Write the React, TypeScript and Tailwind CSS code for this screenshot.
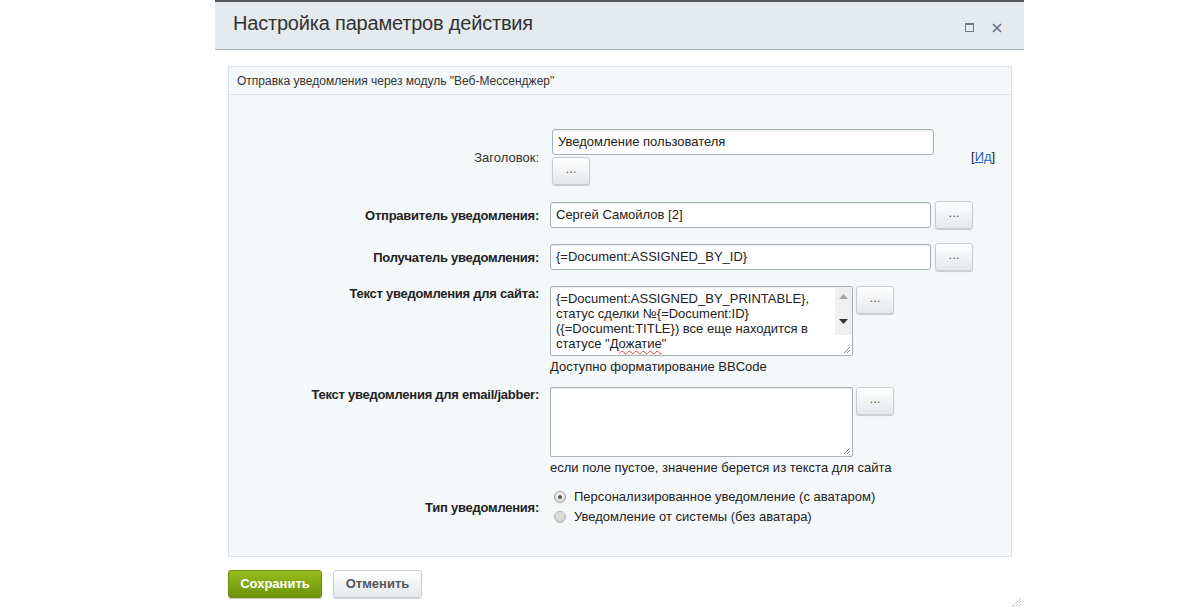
import React from 'react';

const font = "font-['Liberation_Sans',Arial,sans-serif]";

function DotsButton() {
  return (
    <button
      type="button"
      className="flex h-[28px] w-[38px] shrink-0 items-center justify-center rounded-[3px] border border-[#c6ced3] bg-gradient-to-b from-[#ffffff] to-[#e3e9ec] pb-[4px] text-[13px] text-[#555] shadow-[0_1px_1px_rgba(0,0,0,0.18)]"
    >
      ...
    </button>
  );
}

function TextInput({ value, width }: { value: string; width: string }) {
  return (
    <div
      className={`flex h-[26px] items-center rounded-[3px] border border-[#a7b0b5] bg-white px-[5px] text-[13px] text-[#222] shadow-[inset_0_1px_1px_rgba(0,0,0,0.08)] ${width}`}
    >
      {value}
    </div>
  );
}

function Grip({ color = '#8a8a8a' }: { color?: string }) {
  return (
    <svg width="9" height="9" viewBox="0 0 9 9">
      <path d="M8 2 L2 8 M8 5 L5 8" stroke={color} strokeWidth="1" />
    </svg>
  );
}

function FakeTextarea({ children, scroll }: { children?: React.ReactNode; scroll?: boolean }) {
  return (
    <div className="flex h-[70px] w-[303px] shrink-0 overflow-hidden rounded-[2px] border border-[#a7b0b5] bg-white shadow-[inset_0_1px_1px_rgba(0,0,0,0.08)]">
      <div className="flex-1 overflow-hidden px-[5px] pt-[4px] text-[13px] leading-[15px] text-[#222]">
        {children}
      </div>
      {scroll ? (
        <div className="flex w-[17px] flex-col">
          <div className="flex h-[48px] flex-col items-center bg-[#f0f0f0] pt-[7px]">
            <svg width="9" height="5" viewBox="0 0 9 5">
              <path d="M0 5 L4.5 0 L9 5 Z" fill="#a3a3a3" />
            </svg>
            <svg width="9" height="5" viewBox="0 0 9 5" className="mt-[20px]">
              <path d="M0 0 L9 0 L4.5 5 Z" fill="#333" />
            </svg>
          </div>
          <div className="flex flex-1 items-end justify-end bg-white pb-[1px] pr-[1px]">
            <Grip />
          </div>
        </div>
      ) : (
        <div className="flex w-[10px] items-end justify-end pb-[1px] pr-[1px]">
          <Grip />
        </div>
      )}
    </div>
  );
}

function Radio({ checked }: { checked?: boolean }) {
  return (
    <span
      className={`flex h-[12px] w-[12px] shrink-0 items-center justify-center rounded-full border ${
        checked ? 'border-[#9a9a9a] bg-gradient-to-b from-[#f4f4f4] to-[#dcdcdc]' : 'border-[#b4b4b4] bg-gradient-to-b from-[#e2e2e2] to-[#cfcfcf]'
      }`}
    >
      {checked && <span className="h-[4px] w-[4px] rounded-full bg-[#555]" />}
    </span>
  );
}

function Label({ children, bold = true, top }: { children: React.ReactNode; bold?: boolean; top?: boolean }) {
  return (
    <div
      className={`w-[321px] shrink-0 pr-[11px] text-right text-[13px] leading-[15px] ${
        bold ? 'font-bold tracking-[-0.25px] text-[#222]' : 'text-[#333]'
      } ${top ? 'self-start' : ''}`}
    >
      {children}
    </div>
  );
}

export default function App() {
  return (
    <div className={`min-h-[610px] w-full bg-white ${font}`}>
      <div className="ml-[215px] w-[809px]">
        <div className="flex h-[50px] items-center border-t-2 border-b border-t-[#595959] border-b-[#aab3b7] bg-[#e4eaed] pl-[18px] pr-[22px]">
          <div className="flex-1 pb-[5px] text-[20px] tracking-[-0.2px] text-[#333]">Настройка параметров действия</div>
          <div className="flex items-center gap-[18px] pt-[4px]">
            <svg width="9" height="9" viewBox="0 0 9 9">
              <rect x="0.5" y="0.5" width="8" height="8" fill="none" stroke="#6c7a8c" strokeWidth="1" />
              <rect x="0" y="0" width="9" height="2" fill="#6c7a8c" />
            </svg>
            <svg width="10" height="10" viewBox="0 0 10 10">
              <path d="M1 1 L9 9 M9 1 L1 9" stroke="#61728a" strokeWidth="1.7" />
            </svg>
          </div>
        </div>

        <div className="pl-[13px] pr-[12px] pt-[16px]">
          <div className="border border-[#d8e3ea] bg-[#f5f8f9]">
            <div className="flex h-[28px] items-center border-b border-[#d8e3ea] pl-[8px] text-[12px] text-[#333]">
              Отправка уведомления через модуль "Веб-Мессенджер"
            </div>

            <div className="pb-[29px] pt-[34px]">
              <div className="flex items-center">
                <Label bold={false}>Заголовок:</Label>
                <div className="ml-[2px] flex w-[382px] flex-col items-start">
                  <TextInput value="Уведомление пользователя" width="w-[382px] h-[25px]" />
                  <div className="mt-[2px]">
                    <DotsButton />
                  </div>
                </div>
                <div className="ml-[37px] text-[13px] text-[#222]">
                  [<a href="#" className="text-[#2066b4] underline">Ид</a>]
                </div>
              </div>

              <div className="mt-[16px] flex items-center">
                <Label>Отправитель уведомления:</Label>
                <TextInput value="Сергей Самойлов [2]" width="w-[381px]" />
                <div className="ml-[4px]">
                  <DotsButton />
                </div>
              </div>

              <div className="mt-[14px] flex items-center">
                <Label>Получатель уведомления:</Label>
                <TextInput value="{=Document:ASSIGNED_BY_ID}" width="w-[381px]" />
                <div className="ml-[4px]">
                  <DotsButton />
                </div>
              </div>

              <div className="mt-[15px] flex items-start">
                <Label top>Текст уведомления для сайта:</Label>
                <div className="flex flex-col">
                  <div className="flex items-start gap-[3px]">
                    <FakeTextarea scroll>
                      <div className="whitespace-nowrap">{'{=Document:ASSIGNED_BY_PRINTABLE},'}</div>
                      <div className="whitespace-nowrap">статус сделки №{'{=Document:ID}'}</div>
                      <div className="whitespace-nowrap">({'{=Document:TITLE}'}) все еще находится в</div>
                      <div className="whitespace-nowrap">
                        статусе "
                        <span className="underline decoration-[#e23b3b] decoration-wavy decoration-1 underline-offset-[2px]">Дожатие</span>"
                      </div>
                    </FakeTextarea>
                    <DotsButton />
                  </div>
                  <div className="mt-[3px] text-[13px] leading-[15px] text-[#222]">Доступно форматирование BBCode</div>
                </div>
              </div>

              <div className="mt-[13px] flex items-start">
                <Label top>Текст уведомления для email/jabber:</Label>
                <div className="flex flex-col">
                  <div className="flex items-start gap-[3px]">
                    <FakeTextarea />
                    <DotsButton />
                  </div>
                  <div className="mt-[3px] text-[13px] leading-[15px] text-[#222]">
                    если поле пустое, значение берется из текста для сайта
                  </div>
                </div>
              </div>

              <div className="mt-[12px] flex items-center">
                <Label>Тип уведомления:</Label>
                <div className="flex flex-col pl-[4px]">
                  <div className="flex h-[20px] items-center gap-[8px] text-[13px] text-[#222]">
                    <Radio checked />
                    Персонализированное уведомление (с аватаром)
                  </div>
                  <div className="flex h-[20px] items-center gap-[8px] text-[13px] text-[#222]">
                    <Radio />
                    Уведомление от системы (без аватара)
                  </div>
                </div>
              </div>
            </div>
          </div>
        </div>

        <div className="flex items-end pl-[13px] pr-[2px] pt-[13px]">
          <div className="flex gap-[11px] pb-[10px]">
            <button
              type="button"
              className="h-[28px] w-[94px] rounded-[3px] border border-[#6a8e10] bg-gradient-to-b from-[#97bc1c] to-[#6b940b] text-[13px] font-bold text-white shadow-[0_1px_1px_rgba(0,0,0,0.25)]"
            >
              Сохранить
            </button>
            <button
              type="button"
              className="h-[28px] w-[89px] rounded-[3px] border border-[#c6ced3] bg-gradient-to-b from-[#ffffff] to-[#e3e9ec] text-[13px] font-bold text-[#555] shadow-[0_1px_1px_rgba(0,0,0,0.18)]"
            >
              Отменить
            </button>
          </div>
          <div className="ml-auto">
            <svg width="11" height="11" viewBox="0 0 11 11">
              <path d="M10 1 L1 10 M10 4 L4 10 M10 7 L7 10" stroke="#9a9a9a" strokeWidth="1" strokeDasharray="1 1" />
            </svg>
          </div>
        </div>
      </div>
    </div>
  );
}
